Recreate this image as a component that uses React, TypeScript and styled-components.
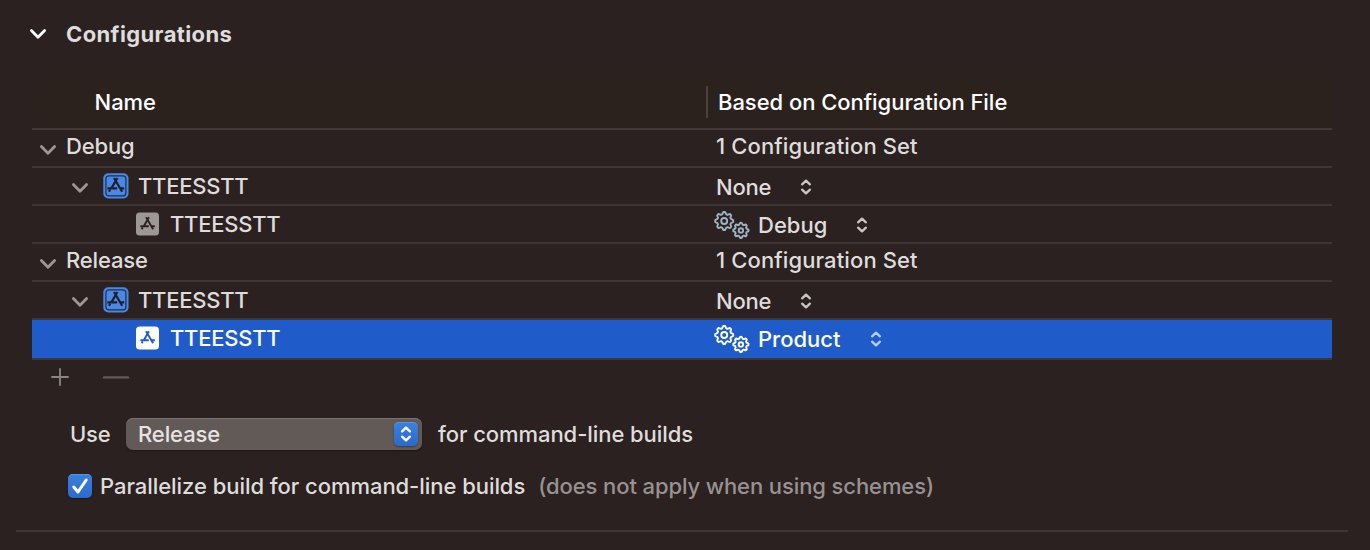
import React from 'react';
import styled, { createGlobalStyle } from 'styled-components';

const GlobalStyle = createGlobalStyle`
  * { box-sizing: border-box; }
  body {
    margin: 0;
    background: #2b2120;
    color: #dfdddc;
    font-family: Inter, "Liberation Sans", sans-serif;
    font-size: 22px;
    font-weight: 500;
    line-height: 28px;
  }
  svg { display: block; flex: none; }
`;

const Panel = styled.main`
  width: 1370px;
  height: 550px;
  overflow: hidden;
`;

const SectionHeader = styled.header`
  display: flex;
  align-items: center;
  gap: 19px;
  height: 68px;
  padding-left: 29px;
`;

const SectionTitle = styled.h1`
  margin: 0;
  font-size: 22px;
  font-weight: 700;
  letter-spacing: 0.38px;
`;

const Table = styled.section`
  width: 1300px;
  margin: 8px 0 0 32px;
`;

const HeaderRow = styled.div`
  display: flex;
  align-items: center;
  height: 54px;
  border-bottom: 2px solid #433936;
  background: #2b221e;
  color: #fff;
`;

const HeaderName = styled.div`
  width: 674px;
  padding-left: 62.6px;
`;

const HeaderFile = styled.div`
  display: flex;
  align-items: center;
  height: 32px;
  padding-left: 10px;
  border-left: 2px solid #4b423e;
`;

const TableRow = styled.div<{ $selected?: boolean }>`
  display: flex;
  height: ${(p) => (p.$selected ? 40 : 38)}px;
  border-bottom: 2px solid #3f3534;
  background: ${(p) => (p.$selected ? '#1f5bc9' : 'transparent')};
  background-clip: padding-box;
  color: ${(p) => (p.$selected ? '#fff' : 'inherit')};
`;

const NameCell = styled.div<{ $indent: number; $lift?: number }>`
  display: flex;
  align-items: center;
  width: 682px;
  padding-left: ${(p) => p.$indent}px;
  padding-bottom: ${(p) => p.$lift ?? 0}px;
`;

const FileCell = styled.div<{ $lift?: number; $drop?: number }>`
  display: flex;
  align-items: center;
  padding-bottom: ${(p) => p.$lift ?? 0}px;
  padding-top: ${(p) => p.$drop ?? 0}px;
`;

const Label = styled.span<{ $track?: number; $left?: number; $right?: number }>`
  white-space: pre;
  letter-spacing: ${(p) => p.$track ?? 0}px;
  margin-left: ${(p) => p.$left ?? 0}px;
  margin-right: ${(p) => p.$right ?? 0}px;
`;

const ChevronSlot = styled.span<{ $drop?: number; $gap?: number }>`
  display: flex;
  padding-top: ${(p) => p.$drop ?? 0}px;
  margin-right: ${(p) => p.$gap ?? 0}px;
`;

const TableTools = styled.div`
  display: flex;
  align-items: center;
  gap: 33px;
  height: 34px;
  padding-left: 19px;
`;

const SettingRow = styled.div<{ $top: number; $left: number }>`
  display: flex;
  align-items: center;
  height: 32px;
  margin-top: ${(p) => p.$top}px;
  padding-left: ${(p) => p.$left}px;
`;

const SelectPrefix = styled.span`
  width: 56px;
  letter-spacing: -0.2px;
`;

const Select = styled.button`
  display: flex;
  align-items: center;
  justify-content: space-between;
  width: 296px;
  height: 32px;
  margin: 0 16px 0 0;
  padding: 0 4px 0 12px;
  border: 0;
  border-radius: 7px;
  background: #625a57;
  box-shadow: inset 0 1px 0 #7b7370, 0 1px 2px rgba(0, 0, 0, 0.35);
  color: #e6e4e3;
  font: inherit;
`;

const BlueBox = styled.span`
  display: flex;
  align-items: center;
  justify-content: center;
  width: 24px;
  height: 24px;
  border-radius: 5px;
  background: linear-gradient(#3b80de, #2b6acb);
  box-shadow: inset 0 1px 0 #5593e4, 0 1px 2px rgba(0, 0, 0, 0.35);
`;

const Muted = styled(Label)`
  color: #989290;
`;

const Divider = styled.hr`
  width: 1332px;
  height: 2px;
  margin: 28px 0 0 16px;
  border: 0;
  background: #403634;
`;

const Chevron = ({ color = '#9c9694' }: { color?: string }) => (
  <svg width="18" height="12" viewBox="0 0 18 12" fill="none" stroke={color} strokeWidth="2.8" strokeLinecap="round" strokeLinejoin="round">
    <path d="M2.4 2.4 L9 9.2 L15.6 2.4" />
  </svg>
);

const UpDown = ({ color = '#c9c6c4', width = 2.3 }: { color?: string; width?: number }) => (
  <svg width="12" height="18" viewBox="0 0 12 18" fill="none" stroke={color} strokeWidth={width} strokeLinecap="round" strokeLinejoin="round">
    <path d="M2.1 6.3 L6 2.6 L9.9 6.3 M2.1 11.7 L6 15.4 L9.9 11.7" />
  </svg>
);

const AppGlyph = ({ color }: { color: string }) => (
  <g fill="none" stroke={color} strokeWidth="2.2" strokeLinecap="butt">
    <path d="M13.8 4 L7.6 14.6 M10.4 4 L18.6 17.8 M3.8 14.4 H13.6 M16 14.4 H20.6 M6.5 15.8 L5.4 17.8" />
  </g>
);

const ProjectIcon = () => (
  <svg width="26" height="26" viewBox="0 0 26 26">
    <rect x="0.3" y="0.3" width="25.2" height="25.2" rx="5" fill="#4689ea" />
    <rect x="2.9" y="2.9" width="20" height="20" rx="3" fill="none" stroke="#2a2c3a" strokeWidth="1.2" />
    <g transform="translate(0.6 1)"><AppGlyph color="#231f24" /></g>
  </svg>
);

const TargetIcon = ({ fill, glyph }: { fill: string; glyph: string }) => (
  <svg width="23" height="24" viewBox="0 0 23 24">
    <rect x="0" y="0.6" width="23" height="23" rx="3.6" fill={fill} />
    <g transform="translate(1.1 1.9) scale(0.86)"><AppGlyph color={glyph} /></g>
  </svg>
);

const gearPath = (cx: number, cy: number, outer: number, inner: number) => {
  const steps = 64;
  const points = Array.from({ length: steps }, (_, i) => {
    const a = (i / steps) * Math.PI * 2;
    const wave = Math.max(-1, Math.min(1, Math.cos(a * 8) * 1.5));
    const r = (outer + inner) / 2 + (wave * (outer - inner)) / 2;
    return `${(cx + r * Math.cos(a)).toFixed(2)} ${(cy + r * Math.sin(a)).toFixed(2)}`;
  });
  return `M${points.join(' L')} Z`;
};

const Gears = ({ color }: { color: string }) => (
  <svg width="36" height="30" viewBox="0 0 36 30" fill="none" stroke={color} strokeWidth="1.9" strokeLinejoin="round">
    <path d={gearPath(10.2, 11, 9, 7)} />
    <circle cx="10.2" cy="11" r="3" />
    <path d={gearPath(26.9, 20.4, 7.6, 5.9)} />
    <circle cx="26.9" cy="20.4" r="2.2" />
  </svg>
);

const ConfigurationRows = ({ name, file, selected }: {
  name: string;
  file: string;
  selected?: boolean;
}) => (
  <>
    <TableRow>
      <NameCell $indent={7} $lift={4}>
        <ChevronSlot $drop={7}><Chevron /></ChevronSlot>
        <Label $left={9} $track={-0.15}>{name}</Label>
      </NameCell>
      <FileCell $lift={4}><Label $left={2} $track={0.12}>1 Configuration Set</Label></FileCell>
    </TableRow>
    <TableRow>
      <NameCell $indent={39}>
        <ChevronSlot $drop={3} $gap={14}><Chevron /></ChevronSlot>
        <ProjectIcon />
        <Label $left={9} $track={-0.25}>TTEESSTT</Label>
      </NameCell>
      <FileCell $drop={2}>
        <Label $left={2} $right={29} $track={-0.2}>None</Label>
        <UpDown />
      </FileCell>
    </TableRow>
    <TableRow $selected={selected}>
      <NameCell $indent={104} $lift={selected ? 2 : 0}>
        <TargetIcon fill={selected ? '#fff' : '#9d9896'} glyph={selected ? '#1f5bc9' : '#2b2120'} />
        <Label $left={11} $track={-0.25}>TTEESSTT</Label>
      </NameCell>
      <FileCell $drop={selected ? 0 : 2}>
        <Gears color={selected ? '#fff' : '#9fb4c2'} />
        <Label $left={8} $right={29}>{file}</Label>
        <UpDown color={selected ? '#b9cdf0' : undefined} />
      </FileCell>
    </TableRow>
  </>
);

export default function App() {
  return (
    <Panel>
      <GlobalStyle />
      <SectionHeader>
        <Chevron color="#fff" />
        <SectionTitle>Configurations</SectionTitle>
      </SectionHeader>
      <Table>
        <HeaderRow>
          <HeaderName><Label $track={-0.1}>Name</Label></HeaderName>
          <HeaderFile><Label $track={-0.04}>Based on Configuration File</Label></HeaderFile>
        </HeaderRow>
        <ConfigurationRows name="Debug" file="Debug" />
        <ConfigurationRows name="Release" file="Product" selected />
        <TableTools>
          <svg width="18" height="18" viewBox="0 0 18 18" stroke="#8b8583" strokeWidth="1.8" strokeLinecap="round">
            <path d="M9 1 V17 M1 9 H17" />
          </svg>
          <svg width="28" height="4" viewBox="0 0 28 4" stroke="#625a58" strokeWidth="2.4" strokeLinecap="round">
            <path d="M2 2.4 H26" />
          </svg>
        </TableTools>
      </Table>
      <SettingRow $top={24} $left={70}>
        <SelectPrefix>Use</SelectPrefix>
        <Select>
          <Label $track={-0.1}>Release</Label>
          <BlueBox><UpDown color="#fff" width={2.4} /></BlueBox>
        </Select>
        <Label $track={-0.06}>for command-line builds</Label>
      </SettingRow>
      <SettingRow $top={20} $left={68}>
        <BlueBox>
          <svg width="18" height="18" viewBox="0 0 18 18" fill="none" stroke="#fff" strokeWidth="3" strokeLinecap="round" strokeLinejoin="round">
            <path d="M2.8 10 L7 15 L15.2 3" />
          </svg>
        </BlueBox>
        <Label $left={8} $track={-0.045}>Parallelize build for command-line builds</Label>
        <Muted $left={13} $track={-0.1}>(does not apply when using schemes)</Muted>
      </SettingRow>
      <Divider />
    </Panel>
  );
}
